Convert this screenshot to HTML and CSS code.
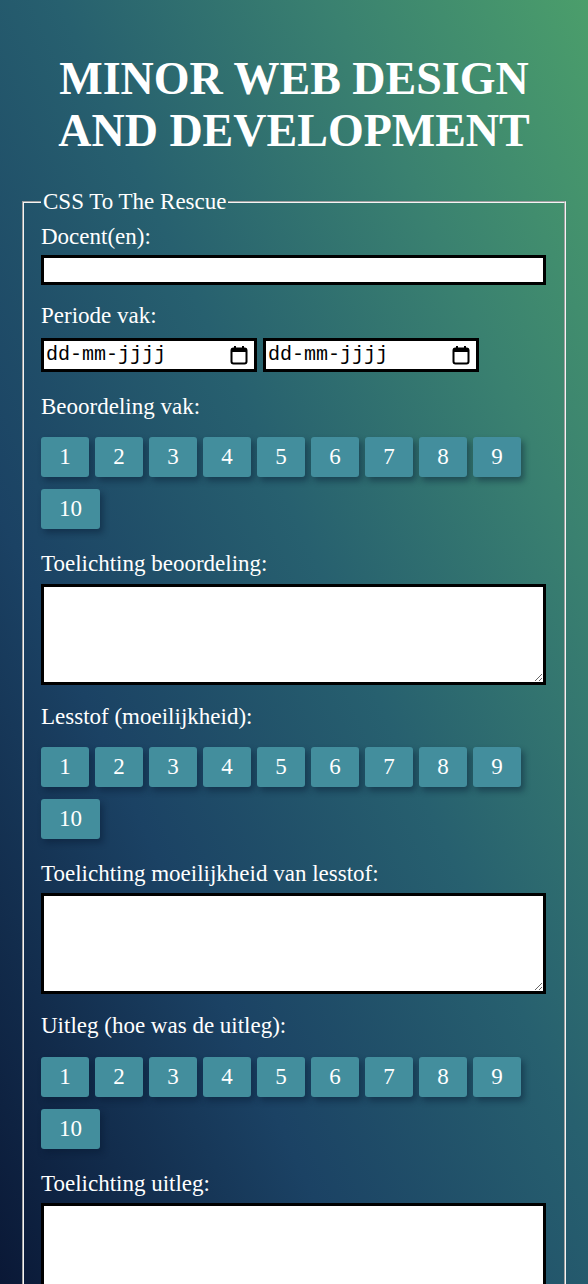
FILE: index.html
```html
<!DOCTYPE html>
<html lang="nl">
<head>
<meta charset="utf-8">
<title>Minor Web Design and Development</title>
<link rel="stylesheet" href="styles.css">
</head>
<body>
<h1 class="title">MINOR WEB DESIGN AND DEVELOPMENT</h1>
<form class="survey">
  <fieldset class="course">
    <legend class="course-legend">CSS To The Rescue</legend>

    <div class="field field-input">
      <label class="field-label" for="docent">Docent(en):</label>
      <input class="text-input" id="docent" type="text">
    </div>

    <div class="field field-date">
      <span class="field-label">Periode vak:</span>
      <div class="date-row">
        <div class="date-field"><input class="date-input" type="text" placeholder="dd-mm-jjjj"><svg class="cal" viewBox="0 0 18 20" width="18" height="20"><rect x="1.5" y="3.5" width="15" height="15" rx="2" fill="none" stroke="#000" stroke-width="2"/><rect x="1.5" y="3.5" width="15" height="3.5" fill="#000"/><rect x="4" y="1" width="2" height="4" fill="#000"/><rect x="12" y="1" width="2" height="4" fill="#000"/></svg></div>
        <div class="date-field"><input class="date-input" type="text" placeholder="dd-mm-jjjj"><svg class="cal" viewBox="0 0 18 20" width="18" height="20"><rect x="1.5" y="3.5" width="15" height="15" rx="2" fill="none" stroke="#000" stroke-width="2"/><rect x="1.5" y="3.5" width="15" height="3.5" fill="#000"/><rect x="4" y="1" width="2" height="4" fill="#000"/><rect x="12" y="1" width="2" height="4" fill="#000"/></svg></div>
      </div>
    </div>

    <div class="field field-scale">
      <span class="field-label">Beoordeling vak:</span>
      <div class="scale">
        <button type="button" class="scale-btn">1</button><button type="button" class="scale-btn">2</button><button type="button" class="scale-btn">3</button><button type="button" class="scale-btn">4</button><button type="button" class="scale-btn">5</button><button type="button" class="scale-btn">6</button><button type="button" class="scale-btn">7</button><button type="button" class="scale-btn">8</button><button type="button" class="scale-btn">9</button><button type="button" class="scale-btn">10</button>
      </div>
    </div>

    <div class="field field-text">
      <label class="field-label" for="t1">Toelichting beoordeling:</label>
      <textarea class="text-area" id="t1"></textarea>
    </div>

    <div class="field field-scale">
      <span class="field-label">Lesstof (moeilijkheid):</span>
      <div class="scale">
        <button type="button" class="scale-btn">1</button><button type="button" class="scale-btn">2</button><button type="button" class="scale-btn">3</button><button type="button" class="scale-btn">4</button><button type="button" class="scale-btn">5</button><button type="button" class="scale-btn">6</button><button type="button" class="scale-btn">7</button><button type="button" class="scale-btn">8</button><button type="button" class="scale-btn">9</button><button type="button" class="scale-btn">10</button>
      </div>
    </div>

    <div class="field field-text">
      <label class="field-label" for="t2">Toelichting moeilijkheid van lesstof:</label>
      <textarea class="text-area" id="t2"></textarea>
    </div>

    <div class="field field-scale">
      <span class="field-label">Uitleg (hoe was de uitleg):</span>
      <div class="scale">
        <button type="button" class="scale-btn">1</button><button type="button" class="scale-btn">2</button><button type="button" class="scale-btn">3</button><button type="button" class="scale-btn">4</button><button type="button" class="scale-btn">5</button><button type="button" class="scale-btn">6</button><button type="button" class="scale-btn">7</button><button type="button" class="scale-btn">8</button><button type="button" class="scale-btn">9</button><button type="button" class="scale-btn">10</button>
      </div>
    </div>

    <div class="field field-text">
      <label class="field-label" for="t3">Toelichting uitleg:</label>
      <textarea class="text-area" id="t3"></textarea>
    </div>
  </fieldset>
</form>
</body>
</html>
```

FILE: styles.css
```css
html {
  min-height: 100%;
}

body {
  margin: 0;
  min-height: 100%;
  font-family: "Liberation Serif", "Times New Roman", serif;
  font-size: 23px;
  color: #fff;
  background: linear-gradient(to top right, #0a1836 0%, #1b4264 30%, #27606f 55%, #3a8170 78%, #4b9e6b 100%) fixed;
}

.title {
  margin: 53px 0 32px;
  padding: 0 40px;
  font-size: 46px;
  font-weight: bold;
  line-height: 52px;
  text-align: center;
}

.survey {
  margin: 0 22px;
}

.course {
  margin: 0;
  padding: 0 18px 20px 17px;
  border: 2px groove #f4f4f4;
  min-width: 0;
}

.course-legend {
  padding: 0 2px;
  line-height: 26px;
}

.field {
  display: flex;
  flex-direction: column;
}

.field-label {
  display: block;
  line-height: 26.4px;
}

.field-input {
  padding-top: 9px;
}

.field-input .field-label {
  margin-bottom: 5px;
}

.text-input {
  box-sizing: border-box;
  width: 100%;
  height: 30px;
  margin: 0;
  border: 3px solid #000;
  background: #fff;
  font: 20px "Liberation Mono", monospace;
  padding: 0 2px;
}

.field-date {
  padding-top: 18px;
}

.date-row {
  display: flex;
  gap: 6px;
  margin-top: 8px;
}

.date-field {
  box-sizing: border-box;
  width: 216px;
  height: 34px;
  border: 3px solid #000;
  background: #fff;
  display: flex;
  align-items: center;
  padding: 0 6px 0 2px;
}

.date-input {
  flex: 1;
  min-width: 0;
  border: 0;
  padding: 0;
  margin: 0;
  background: transparent;
  font: 20px "Liberation Mono", monospace;
  color: #000;
  outline: none;
}

.date-input::placeholder {
  color: #000;
  opacity: 1;
}

.cal {
  flex: none;
  display: block;
}

.field-scale {
  padding-top: 23px;
}

.field-date + .field-scale {
  padding-top: 22px;
}

.scale {
  display: flex;
  flex-wrap: wrap;
  gap: 12px 6px;
  margin-top: 17px;
}

.scale-btn {
  box-sizing: border-box;
  height: 40px;
  margin: 0;
  padding: 0 18px;
  min-width: 48px;
  border: 0;
  border-radius: 3px;
  background: #438e9d;
  color: #fff;
  font: 23px "Liberation Serif", "Times New Roman", serif;
  box-shadow: 3px 4px 6px rgba(6, 24, 48, 0.45);
  cursor: pointer;
}

.field-text {
  padding-top: 22px;
}

.text-area {
  box-sizing: border-box;
  width: 100%;
  height: 101px;
  margin: 6px 0 0;
  border: 3px solid #000;
  background: #fff;
  font: 20px "Liberation Mono", monospace;
  padding: 2px;
  resize: both;
}

.field-text + .field-scale {
  padding-top: 19px;
}
```
